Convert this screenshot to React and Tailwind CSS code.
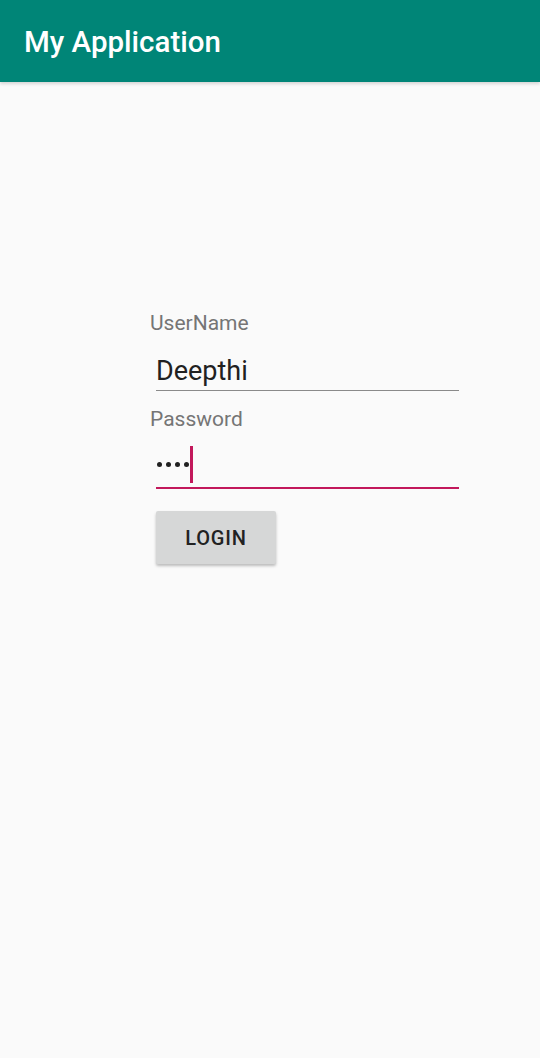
export default function App() {
  return (
    <div className="w-[540px] h-[1058px] bg-[#fafafa] flex flex-col" style={{ fontFamily: "Roboto, 'Noto Sans', sans-serif" }}>
      <div className="h-[82px] bg-[#008577] flex items-center px-6 shadow-[0_2px_3px_rgba(0,0,0,0.15)]">
        <span className="text-white text-[29.5px] font-medium leading-none mt-[3px]">My Application</span>
      </div>
      <div className="flex flex-col pl-[150px] pt-[229px]">
        <div className="text-[21px] leading-[24px] text-[#757575] h-[24px]">UserName</div>
        <div className="ml-[6px] w-[303px] h-[46px] border-b border-[#8a8a8a] mt-[10px] flex items-end pb-[3px]">
          <span className="text-[27px] leading-[32px] text-[#212121]">Deepthi</span>
        </div>
        <div className="text-[21px] leading-[24px] text-[#757575] mt-[16px] h-[24px]">Password</div>
        <div className="ml-[6px] w-[303px] h-[58px] border-b-2 border-[#c2185b] flex items-end pb-[4px]">
          <div className="flex items-center h-[37px] pl-[1px]">
            <span className="w-[5px] h-[5px] rounded-full bg-[#212121]"></span>
            <span className="w-[5px] h-[5px] rounded-full bg-[#212121] ml-[4px]"></span>
            <span className="w-[5px] h-[5px] rounded-full bg-[#212121] ml-[4px]"></span>
            <span className="w-[5px] h-[5px] rounded-full bg-[#212121] ml-[4px]"></span>
            <span className="w-[2.5px] h-[37px] bg-[#c2185b] ml-[1px]"></span>
          </div>
        </div>
        <div className="ml-[6px] mt-[22px] w-[120px] h-[53px] bg-[#d6d7d7] rounded-[2px] shadow-[0_2px_3px_rgba(0,0,0,0.25)] flex items-center justify-center">
          <span className="text-[20px] font-medium text-[#222] tracking-[0.8px]">LOGIN</span>
        </div>
      </div>
    </div>
  );
}
